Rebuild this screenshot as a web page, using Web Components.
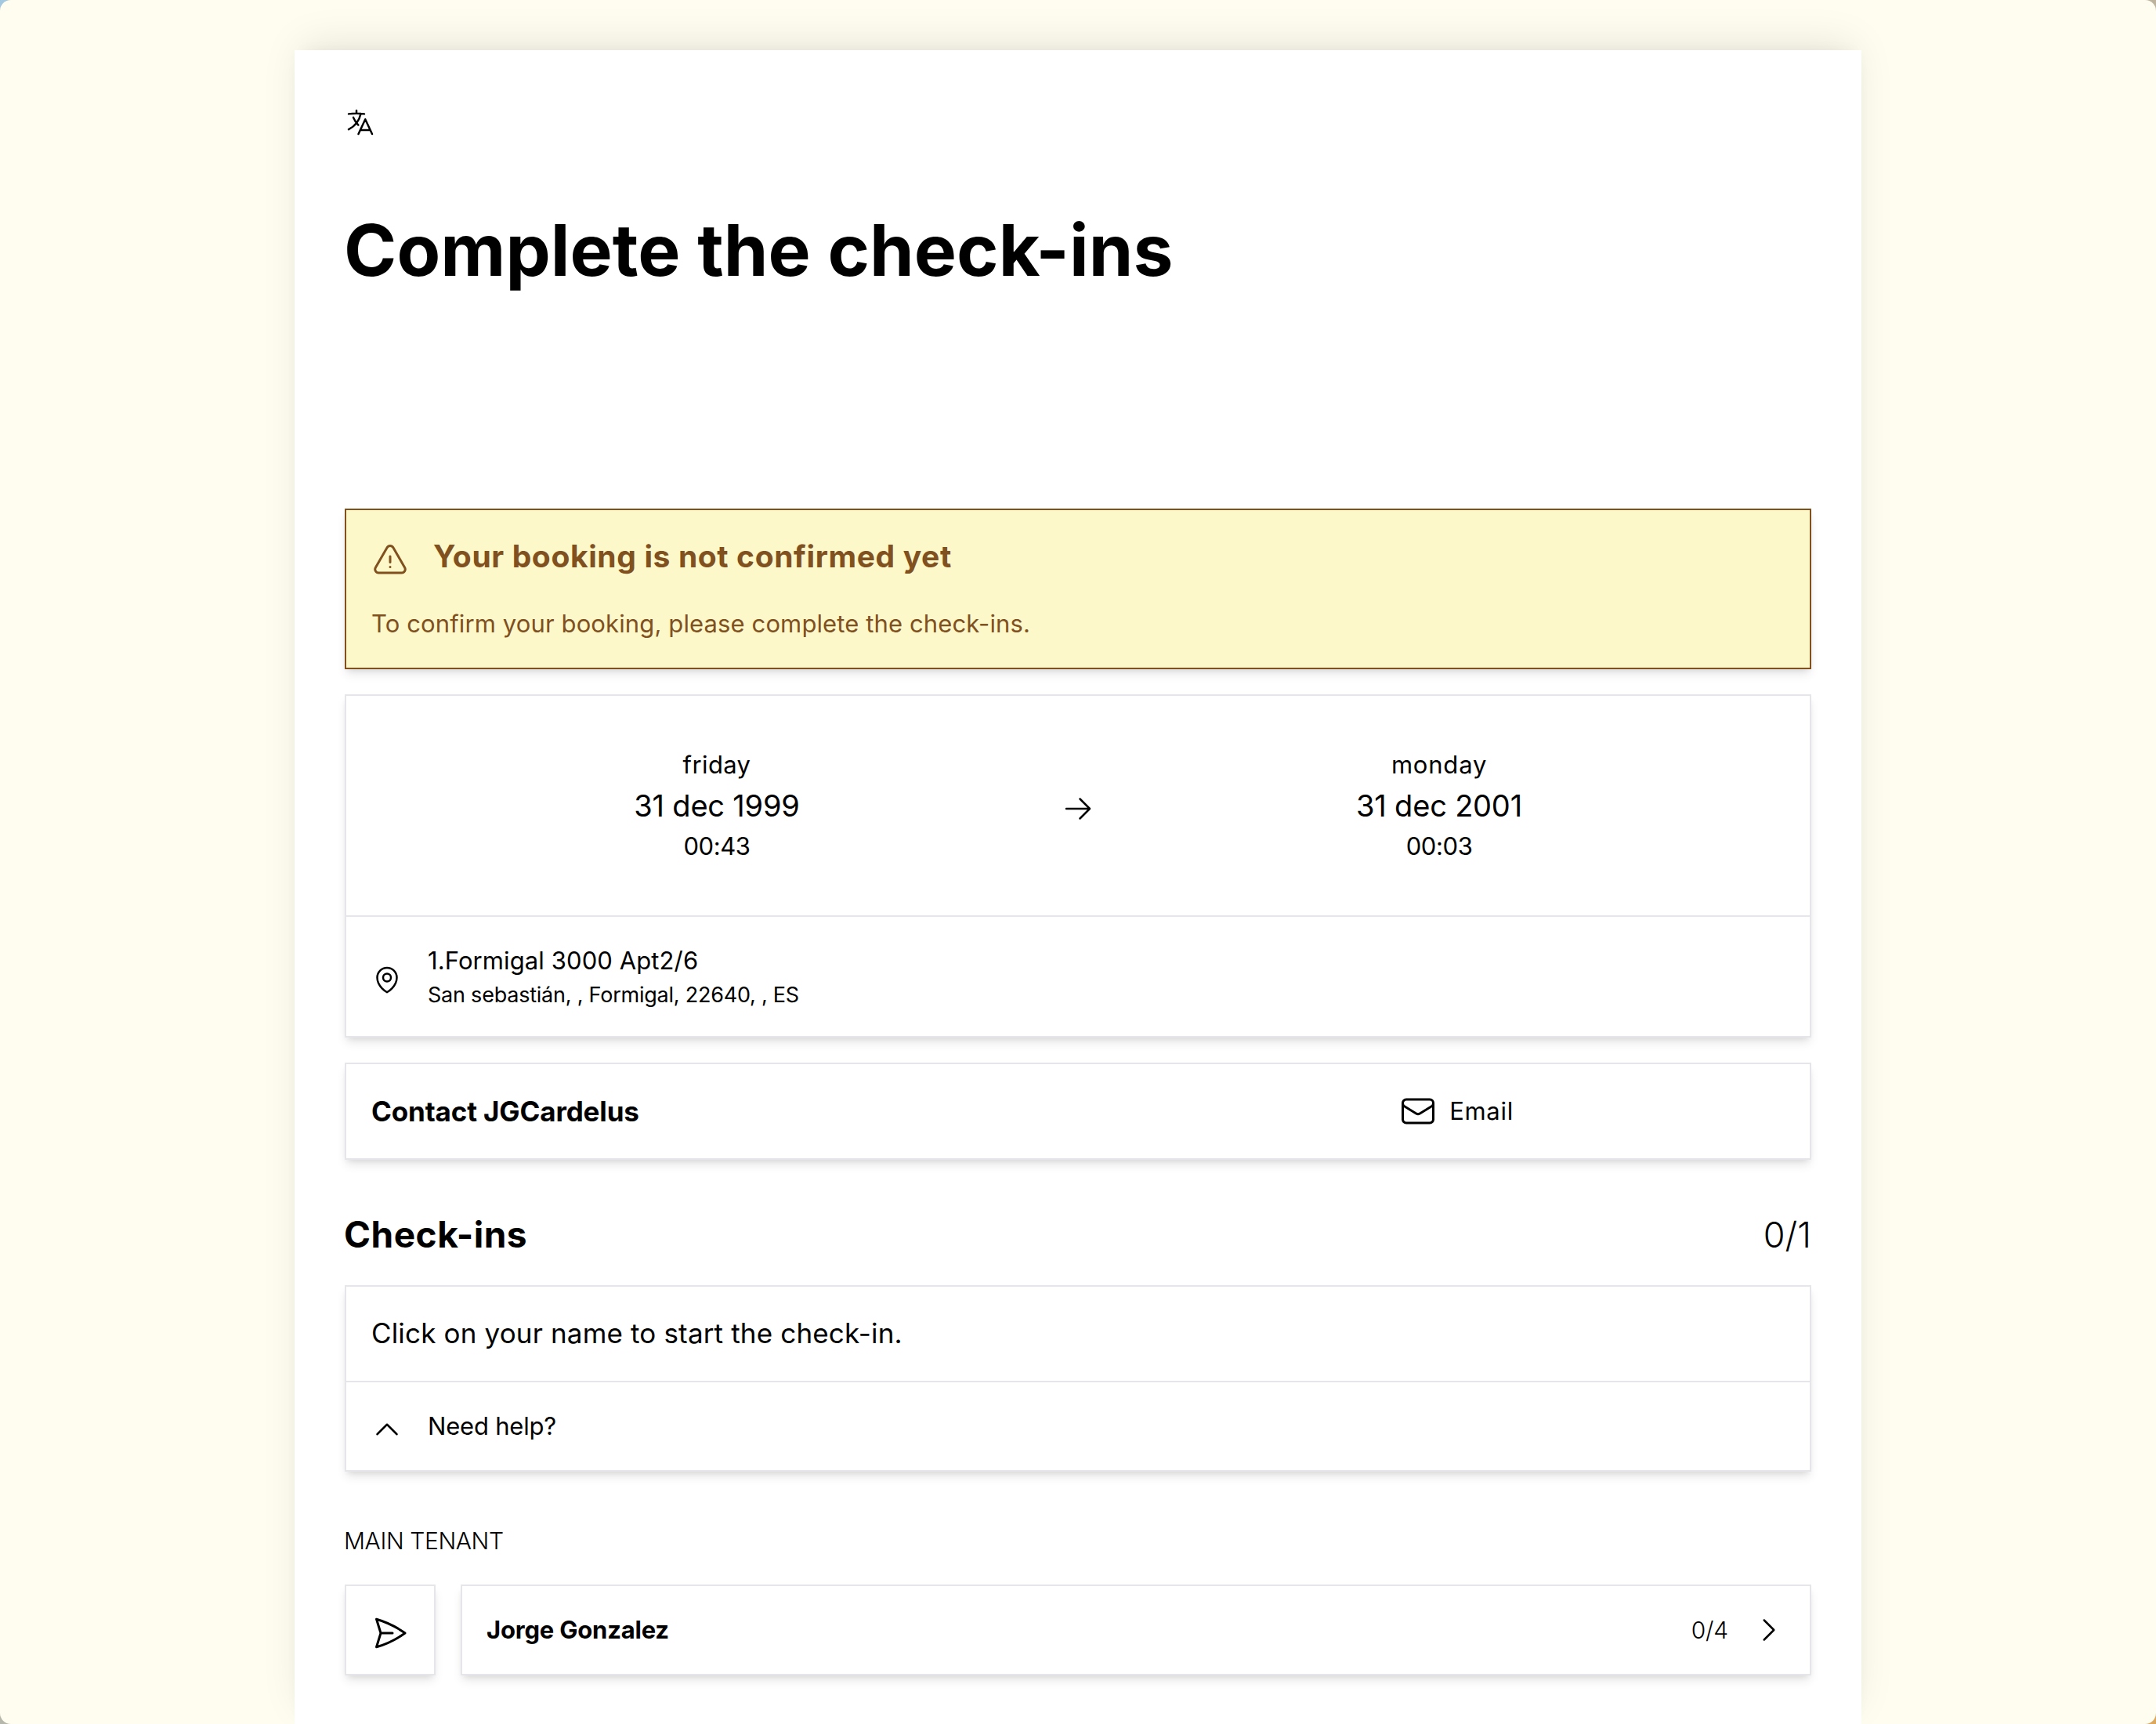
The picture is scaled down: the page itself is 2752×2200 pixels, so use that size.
<!DOCTYPE html>
<html lang="en">
<head>
<meta charset="utf-8">
<title>Complete the check-ins</title>
<style>
    html {
        height: 100%;
        background: linear-gradient(135deg, #a3c8df, #b9b5a6 50%, #dca85f);
    }
    body {
        margin: 0;
        height: 2200px;
        border-radius: 14px;
        background-color: #fffdf0;
        overflow: hidden;
        color: #000;
        font-family: Inter, "Liberation Sans", sans-serif;
        font-size: 31px;
        line-height: 48px;
    }
</style>
</head>
<body>
<booking-page>
    <svg-icon name="language" size="40" style="margin-top: 8px"></svg-icon>
    <page-title>Complete the check-ins</page-title>

    <notice-box>
        <span slot="title">Your booking is not confirmed yet</span>
        To confirm your booking, please complete the check-ins.
    </notice-box>

    <info-card style="margin-top: 32px">
        <stay-dates>
            <stay-date slot="from" style="--day: .4px; --time: -.4px" day="friday" date="31 dec 1999" time="00:43"></stay-date>
            <stay-date slot="to" style="--day: .8px; --time: -.4px" day="monday" date="31 dec 2001" time="00:03"></stay-date>
        </stay-dates>
        <icon-row icon="map-pin" style="letter-spacing: .1px">
            1.Formigal 3000 Apt2/6
            <span slot="sub">San sebastián, , Formigal, 22640, , ES</span>
        </icon-row>
    </info-card>

    <info-card style="margin-top: 32px">
        <contact-row name="JGCardelus"></contact-row>
    </info-card>

    <section-head count="0/1" style="margin-top: 64px">Check-ins</section-head>

    <info-card style="margin-top: 32px">
        <text-row>Click on your name to start the check-in.</text-row>
        <icon-row icon="chevron-up" style="letter-spacing: -.2px">Need help?</icon-row>
    </info-card>

    <tenant-group label="MAIN TENANT" style="margin-top: 64px">
        <tenant-row done="0/4">Jorge Gonzalez</tenant-row>
    </tenant-group>
</booking-page>

<script>
const ICONS = {
    "language": "m10.5 21 5.25-11.25L21 21m-9-3h7.5M3 5.621a48.474 48.474 0 0 1 6-.371m0 0c1.12 0 2.233.038 3.334.114M9 5.25V3m3.334 2.364C11.176 10.658 7.69 15.08 3 17.502m9.334-12.138c.896.061 1.785.147 2.666.257m-4.589 8.495a18.023 18.023 0 0 1-3.827-5.802",
    "warning": "M12 9v3.75m-9.303 3.376c-.866 1.5.217 3.374 1.948 3.374h14.71c1.73 0 2.813-1.874 1.948-3.374L13.949 3.378c-.866-1.5-3.032-1.5-3.898 0L2.697 16.126ZM12 15.75h.007v.008H12v-.008Z",
    "arrow-right": "M13.5 4.5 21 12m0 0-7.5 7.5M21 12H3",
    "map-pin": "M15 10.5a3 3 0 1 1-6 0 3 3 0 0 1 6 0ZM19.5 10.5c0 7.142-7.5 11.25-7.5 11.25S4.5 17.642 4.5 10.5a7.5 7.5 0 1 1 15 0Z",
    "envelope": "M21.75 6.75v10.5a2.25 2.25 0 0 1-2.25 2.25h-15a2.25 2.25 0 0 1-2.25-2.25V6.75m19.5 0A2.25 2.25 0 0 0 19.5 4.5h-15a2.25 2.25 0 0 0-2.25 2.25m19.5 0v.243a2.25 2.25 0 0 1-1.07 1.916l-7.5 4.615a2.25 2.25 0 0 1-2.36 0L3.32 8.91a2.25 2.25 0 0 1-1.07-1.916V6.75",
    "chevron-up": "m4.5 15.75 7.5-7.5 7.5 7.5",
    "chevron-right": "m8.25 4.5 7.5 7.5-7.5 7.5",
    "send": "M6 12 3.269 3.125A59.769 59.769 0 0 1 21.485 12 59.768 59.768 0 0 1 3.27 20.875L5.999 12Zm0 0h7.5"
};

class SvgIcon extends HTMLElement {
    constructor() {
        super();
        this.attachShadow({ mode: "open" });
    }

    connectedCallback() {
        const size = this.getAttribute("size") || 48;
        this.shadowRoot.innerHTML = `
        <style>
            :host { display: block; flex: none; width: ${size}px; height: ${size}px; }
            svg { display: block; }
        </style>
        <svg width="${size}" height="${size}" viewBox="0 0 24 24" fill="none" stroke="currentColor"
            stroke-width="1.5" stroke-linecap="round" stroke-linejoin="round">
            <path d="${ICONS[this.getAttribute("name")]}"/>
        </svg>`;
    }
} customElements.define("svg-icon", SvgIcon);


class BookingPage extends HTMLElement {
    constructor() {
        super();
        this.attachShadow({ mode: "open" }).innerHTML = `
        <style>
            :host {
                display: block;
                box-sizing: border-box;
                width: 2000px;
                height: 2138px;
                margin: 64px auto 0;
                padding: 64px;
                background-color: white;
                box-shadow: 0 -16px 50px -10px rgba(0, 0, 0, .1), 0 -4px 20px -12px rgba(0, 0, 0, .1);
            }
        </style>
        <slot></slot>`;
    }
} customElements.define("booking-page", BookingPage);


class PageTitle extends HTMLElement {
    constructor() {
        super();
        this.attachShadow({ mode: "open" }).innerHTML = `
        <style>
            :host { display: block; margin: 95px 0 282px; }
            h1 {
                margin: 0 0 0 -1px;
                font-size: 91px;
                line-height: 96px;
                font-weight: 700;
                letter-spacing: .07px;
            }
        </style>
        <h1><slot></slot></h1>`;
    }
} customElements.define("page-title", PageTitle);


class NoticeBox extends HTMLElement {
    constructor() {
        super();
        this.attachShadow({ mode: "open" }).innerHTML = `
        <style>
            :host {
                display: block;
                padding: 31px 32px 32px;
                border: 2px solid #80501f;
                background-color: #fdf8c9;
                color: #80501f;
                letter-spacing: .12px;
                box-shadow: 0 8px 12px -2px rgba(0, 0, 0, .1), 0 4px 8px -4px rgba(0, 0, 0, .1);
            }
            .head {
                display: flex;
                gap: 31px;
                height: 58px;
                margin-bottom: 32px;
                font-size: 39px;
                line-height: 56px;
                font-weight: 700;
                letter-spacing: .62px;
            }
            svg-icon { align-self: flex-end; }
        </style>
        <div class="head"><svg-icon name="warning"></svg-icon><slot name="title"></slot></div>
        <slot></slot>`;
    }
} customElements.define("notice-box", NoticeBox);


class InfoCard extends HTMLElement {
    constructor() {
        super();
        this.attachShadow({ mode: "open" }).innerHTML = `
        <style>
            :host {
                display: block;
                border: 2px solid #e5e5ea;
                background-color: white;
                box-shadow: 0 8px 12px -2px rgba(0, 0, 0, .1), 0 4px 8px -4px rgba(0, 0, 0, .1);
            }
            ::slotted(:not(:first-child)) { border-top: 2px solid #e5e5ea; }
        </style>
        <slot></slot>`;
    }
} customElements.define("info-card", InfoCard);


class StayDates extends HTMLElement {
    constructor() {
        super();
        this.attachShadow({ mode: "open" }).innerHTML = `
        <style>
            :host {
                display: grid;
                grid-template-columns: 1fr 40px 1fr;
                align-items: center;
                padding: 64px 32px;
            }
            svg-icon { margin-top: 8px; }
        </style>
        <slot name="from"></slot>
        <svg-icon name="arrow-right" size="40"></svg-icon>
        <slot name="to"></slot>`;
    }
} customElements.define("stay-dates", StayDates);


class StayDate extends HTMLElement {
    constructor() {
        super();
        this.attachShadow({ mode: "open" });
    }

    connectedCallback() {
        this.shadowRoot.innerHTML = `
        <style>
            :host { display: block; text-align: center; }
            .day { letter-spacing: var(--day); }
            .date { font-size: 38px; line-height: 56px; letter-spacing: -.2px; }
            .time { letter-spacing: var(--time); }
        </style>
        <div class="day">${this.getAttribute("day")}</div>
        <div class="date">${this.getAttribute("date")}</div>
        <div class="time">${this.getAttribute("time")}</div>`;
    }
} customElements.define("stay-date", StayDate);


class IconRow extends HTMLElement {
    constructor() {
        super();
        this.attachShadow({ mode: "open" });
    }

    connectedCallback() {
        this.shadowRoot.innerHTML = `
        <style>
            :host { display: flex; align-items: center; gap: 32px; padding: 32px; }
            svg-icon { margin-top: 8px; }
            ::slotted([slot=sub]) {
                display: block;
                font-size: 27px;
                line-height: 40px;
                letter-spacing: -.23px;
            }
        </style>
        <svg-icon name="${this.getAttribute("icon")}" size="40"></svg-icon>
        <div><slot></slot><slot name="sub"></slot></div>`;
    }
} customElements.define("icon-row", IconRow);


class TextRow extends HTMLElement {
    constructor() {
        super();
        this.attachShadow({ mode: "open" }).innerHTML = `
        <style>
            :host {
                display: block;
                padding: 31px 32px 33px;
                font-size: 35px;
                line-height: 56px;
                letter-spacing: .16px;
            }
        </style>
        <slot></slot>`;
    }
} customElements.define("text-row", TextRow);


class ContactRow extends HTMLElement {
    constructor() {
        super();
        this.attachShadow({ mode: "open" });
    }

    connectedCallback() {
        this.shadowRoot.innerHTML = `
        <style>
            :host {
                display: grid;
                grid-template-columns: 1fr 838px;
                align-items: center;
                padding: 32px;
            }
            .name { font-size: 35px; line-height: 56px; font-weight: 700; letter-spacing: -.14px; }
            .mail { display: flex; justify-content: center; align-items: center; gap: 16px; letter-spacing: .7px; }
        </style>
        <div class="name">Contact ${this.getAttribute("name")}</div>
        <div class="mail"><svg-icon name="envelope"></svg-icon><span>Email</span></div>`;
    }
} customElements.define("contact-row", ContactRow);


class SectionHead extends HTMLElement {
    constructor() {
        super();
        this.attachShadow({ mode: "open" });
    }

    connectedCallback() {
        this.shadowRoot.innerHTML = `
        <style>
            :host { display: flex; justify-content: space-between; font-size: 46px; line-height: 64px; }
            h2 { margin: -1px 0 1px -1px; font-size: inherit; font-weight: 700; letter-spacing: .5px; }
            span { font-size: 45px; font-weight: 300; }
        </style>
        <h2><slot></slot></h2>
        <span>${this.getAttribute("count")}</span>`;
    }
} customElements.define("section-head", SectionHead);


class TenantGroup extends HTMLElement {
    constructor() {
        super();
        this.attachShadow({ mode: "open" });
    }

    connectedCallback() {
        this.shadowRoot.innerHTML = `
        <style>
            :host { display: block; }
            .label { margin: 0 0 32px -1px; font-size: 30px; font-weight: 300; letter-spacing: -.4px; }
        </style>
        <div class="label">${this.getAttribute("label")}</div>
        <slot></slot>`;
    }
} customElements.define("tenant-group", TenantGroup);


class TenantRow extends HTMLElement {
    constructor() {
        super();
        this.attachShadow({ mode: "open" });
    }

    connectedCallback() {
        this.shadowRoot.innerHTML = `
        <style>
            :host { display: flex; gap: 32px; }
            .send { padding: 36px 32px 28px; }
            info-card:last-child { flex: 1; }
            .row { display: flex; align-items: center; height: 48px; padding: 32px 32px 32px 31px; }
            .name { flex: 1; font-weight: 700; letter-spacing: -.2px; }
            .done { margin-right: 32px; font-size: 30px; font-weight: 300; letter-spacing: -.2px; }
        </style>
        <info-card><div class="send"><svg-icon name="send"></svg-icon></div></info-card>
        <info-card>
            <div class="row">
                <span class="name"><slot></slot></span>
                <span class="done">${this.getAttribute("done")}</span>
                <svg-icon name="chevron-right" size="40"></svg-icon>
            </div>
        </info-card>`;
    }
} customElements.define("tenant-row", TenantRow);
</script>
</body>
</html>
